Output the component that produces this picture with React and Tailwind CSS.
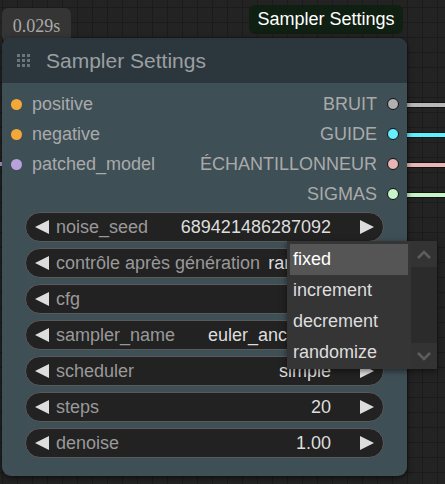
const inputs = [
  { name: "positive", color: "bg-[#f5a83a]" },
  { name: "negative", color: "bg-[#f5a83a]" },
  { name: "patched_model", color: "bg-[#b8a2dc]" },
];

const outputs = [
  { name: "BRUIT", color: "bg-[#b0b0b0]" },
  { name: "GUIDE", color: "bg-[#66eeff]" },
  { name: "ÉCHANTILLONNEUR", color: "bg-[#e8b4b4]" },
  { name: "SIGMAS", color: "bg-[#c8f5c8]" },
];

const wires = [
  { top: "top-[102px]", color: "bg-[#b8b8b8]" },
  { top: "top-[132px]", color: "bg-[#5ff0ff]" },
  { top: "top-[162px]", color: "bg-[#ebb6b6]" },
  { top: "top-[192px]", color: "bg-[#c6f4c6]" },
];

const widgets = [
  { label: "noise_seed", value: "689421486287092" },
  { label: "contrôle après génération", value: "randomize", left: true },
  { label: "cfg", value: "8.0" },
  { label: "sampler_name", value: "euler_ancestral" },
  { label: "scheduler", value: "simple" },
  { label: "steps", value: "20" },
  { label: "denoise", value: "1.00" },
];

const options = ["fixed", "increment", "decrement", "randomize"];

function Arrow({ dir }) {
  return (
    <svg width="14" height="14" viewBox="0 0 14 14" className="shrink-0">
      <polygon
        points={dir === "left" ? "14,0 14,14 0,7" : "0,0 0,14 14,7"}
        fill="#dddddd"
      />
    </svg>
  );
}

function Widget({ label, value, left }) {
  return (
    <div className="flex h-[30px] items-center rounded-full border border-[#5a5a5a] bg-[#222] pl-[9px] pr-[9px] text-[18px]">
      <Arrow dir="left" />
      <span className="ml-[7px] shrink-0 text-[#999]">{label}</span>
      <span
        className={
          left
            ? "ml-[8px] flex-1 overflow-hidden whitespace-nowrap text-[#ddd]"
            : "flex-1 whitespace-nowrap text-right text-[#ddd]"
        }
      >
        {value}
      </span>
      <span className="w-[29px] shrink-0" />
      <Arrow dir="right" />
    </div>
  );
}

function Grip() {
  return (
    <div className="grid grid-cols-3 gap-[2px]">
      {Array.from({ length: 9 }).map((_, i) => (
        <span key={i} className="h-[3px] w-[3px] bg-[#6b767b]" />
      ))}
    </div>
  );
}

function Chevron({ up }) {
  return (
    <svg width="14" height="9" viewBox="0 0 14 9">
      <polyline
        points={up ? "1,8 7,2 13,8" : "1,1 7,7 13,1"}
        fill="none"
        stroke="#5e5e5e"
        strokeWidth="2.5"
      />
    </svg>
  );
}

export default function App() {
  return (
    <div
      className="relative h-[484px] w-[445px] overflow-hidden bg-[#232323] bg-[linear-gradient(to_right,#1b1b1b_1.5px,transparent_1.5px),linear-gradient(to_bottom,#1b1b1b_1.5px,transparent_1.5px)] bg-size-[15px_15px] bg-position-[2px_7px]"
      style={{ fontFamily: '"Liberation Sans", Arial, sans-serif' }}
    >
      {/* wires */}
      <div className="absolute left-0 top-[162px] h-[4px] w-[6px] bg-[#b8a2dc]" />
      {wires.map((w, i) => (
        <div
          key={i}
          className={`absolute left-[400px] h-[6px] w-[50px] border-y border-[#111] ${w.top} ${w.color}`}
        />
      ))}

      {/* timing badge */}
      <div
        className="absolute left-[2px] top-[8px] flex h-[34px] w-[69px] items-start justify-center rounded-[6px] bg-[#353535] pt-[5px] text-[18px] text-[#a9a9a9]"
        style={{ fontFamily: '"Liberation Serif", "Times New Roman", serif' }}
      >
        0.029s
      </div>

      {/* title badge */}
      <div className="absolute left-[249px] top-[5px] flex h-[29px] w-[154px] items-center justify-center rounded-[6px] bg-[#0f1f12] text-[18px] text-white">
        Sampler Settings
      </div>

      {/* node */}
      <div className="absolute left-[2px] top-[38px] h-[438px] w-[405px] overflow-hidden rounded-[9px] bg-[#3e4f56] shadow-[0_2px_6px_rgba(0,0,0,0.6)]">
        <div className="flex h-[45px] items-center bg-[#2c373d] pl-[15px]">
          <Grip />
          <span className="ml-[16px] text-[21px] text-[#9b9fa2]">Sampler Settings</span>
        </div>

        <div className="flex flex-col pt-[6px]">
          {outputs.map((o, i) => {
            const inp = inputs[i];
            return (
              <div key={o.name} className="flex h-[30px] items-center justify-between text-[18px] text-[#aaa]">
                <div className="flex items-center gap-[10px] pl-[9px]">
                  {inp && (
                    <>
                      <span className={`h-[11px] w-[11px] rounded-full ${inp.color}`} />
                      <span>{inp.name}</span>
                    </>
                  )}
                </div>
                <div className="flex items-center gap-[10px] pr-[8px]">
                  <span>{o.name}</span>
                  <span className={`h-[12px] w-[12px] rounded-full border border-[#111] ${o.color}`} />
                </div>
              </div>
            );
          })}
        </div>

        <div className="mx-[23px] mt-[3px] flex flex-col gap-[6px]">
          {widgets.map((w) => (
            <Widget key={w.label} {...w} />
          ))}
        </div>
      </div>

      {/* dropdown */}
      <div className="absolute left-[287px] top-[241px] flex h-[128px] w-[150px] overflow-hidden bg-[#353535] text-[18px] text-[#ddd] shadow-[0_2px_6px_rgba(0,0,0,0.5)]">
        <div className="flex flex-1 flex-col pl-[3px] pt-[3px]">
          {options.map((o, i) => (
            <div
              key={o}
              className={`flex h-[31px] shrink-0 items-center px-[3px] ${i === 0 ? "bg-[#555] text-white" : ""}`}
            >
              {o}
            </div>
          ))}
        </div>
        <div className="ml-[3px] flex w-[26px] flex-col bg-[#2b2b2b]">
          <div className="flex h-[26px] items-center justify-center bg-[#333]">
            <Chevron up />
          </div>
          <div className="flex-1" />
          <div className="flex h-[26px] items-center justify-center bg-[#333]">
            <Chevron />
          </div>
        </div>
      </div>
    </div>
  );
}
